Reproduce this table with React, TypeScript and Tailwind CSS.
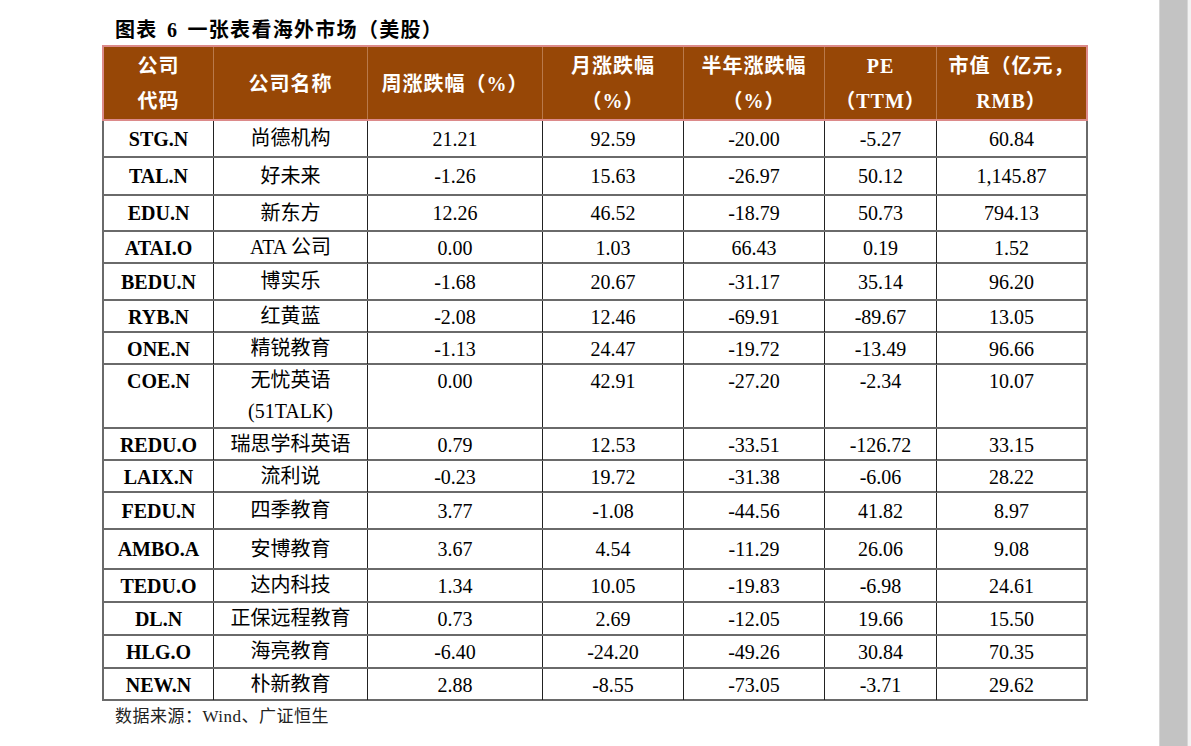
const rows: { code: string; name: string[]; vals: string[]; h: string; top?: boolean }[] = [
  { code: 'STG.N', name: ['尚德机构'], vals: ['21.21', '92.59', '-20.00', '-5.27', '60.84'], h: 'h-[37px]' },
  { code: 'TAL.N', name: ['好未来'], vals: ['-1.26', '15.63', '-26.97', '50.12', '1,145.87'], h: 'h-[38px]' },
  { code: 'EDU.N', name: ['新东方'], vals: ['12.26', '46.52', '-18.79', '50.73', '794.13'], h: 'h-[36px]' },
  { code: 'ATAI.O', name: ['ATA 公司'], vals: ['0.00', '1.03', '66.43', '0.19', '1.52'], h: 'h-[32px]' },
  { code: 'BEDU.N', name: ['博实乐'], vals: ['-1.68', '20.67', '-31.17', '35.14', '96.20'], h: 'h-[37px]' },
  { code: 'RYB.N', name: ['红黄蓝'], vals: ['-2.08', '12.46', '-69.91', '-89.67', '13.05'], h: 'h-[32px]' },
  { code: 'ONE.N', name: ['精锐教育'], vals: ['-1.13', '24.47', '-19.72', '-13.49', '96.66'], h: 'h-[32px]' },
  { code: 'COE.N', name: ['无忧英语', '(51TALK)'], vals: ['0.00', '42.91', '-27.20', '-2.34', '10.07'], h: 'h-[64px]', top: true },
  { code: 'REDU.O', name: ['瑞思学科英语'], vals: ['0.79', '12.53', '-33.51', '-126.72', '33.15'], h: 'h-[32px]' },
  { code: 'LAIX.N', name: ['流利说'], vals: ['-0.23', '19.72', '-31.38', '-6.06', '28.22'], h: 'h-[32px]' },
  { code: 'FEDU.N', name: ['四季教育'], vals: ['3.77', '-1.08', '-44.56', '41.82', '8.97'], h: 'h-[37px]' },
  { code: 'AMBO.A', name: ['安博教育'], vals: ['3.67', '4.54', '-11.29', '26.06', '9.08'], h: 'h-[40px]' },
  { code: 'TEDU.O', name: ['达内科技'], vals: ['1.34', '10.05', '-19.83', '-6.98', '24.61'], h: 'h-[33px]' },
  { code: 'DL.N', name: ['正保远程教育'], vals: ['0.73', '2.69', '-12.05', '19.66', '15.50'], h: 'h-[33px]' },
  { code: 'HLG.O', name: ['海亮教育'], vals: ['-6.40', '-24.20', '-49.26', '30.84', '70.35'], h: 'h-[33px]' },
  { code: 'NEW.N', name: ['朴新教育'], vals: ['2.88', '-8.55', '-73.05', '-3.71', '29.62'], h: 'h-[32px]' },
]

const grid = 'grid grid-cols-[110px_154px_175px_141px_141px_112px_149px]'

const headers: string[][] = [
  ['公司', '代码'],
  ['公司名称'],
  ['周涨跌幅（%）'],
  ['月涨跌幅', '（%）'],
  ['半年涨跌幅', '（%）'],
  ['PE', '（TTM）'],
  ['市值（亿元，', 'RMB）'],
]

export default function App() {
  return (
    <div
      className="flex h-[746px] w-[1191px] bg-white text-black"
      style={{ fontFamily: '"Liberation Serif", "Noto Sans CJK SC", serif' }}
    >
      <div className="flex-1 pl-[102px] pt-[17px]">
        <h1 className="pl-[13px] text-[20px] font-bold leading-[26px] tracking-[1.3px]">
          图表 <span className="mx-[3px]">6</span> 一张表看海外市场（美股）
        </h1>

        <div className="mt-[2px] w-[986px]">
          {/* Header */}
          <div className={`${grid} h-[76px] border-2 border-[#dc8a8a] bg-[#974706] text-white`}>
            {headers.map((lines, i) => (
              <div
                key={i}
                className={`flex flex-col items-center justify-center pt-[2px] text-[20px] font-bold leading-[35px] ${
                  i < headers.length - 1 ? 'border-r border-[#b9794a]' : ''
                }`}
              >
                {lines.map((l) => (
                  <span key={l} className="tracking-[1px]">
                    {l}
                  </span>
                ))}
              </div>
            ))}
          </div>

          {/* Body */}
          <div className="border-x-2 border-[#6a6a6a]">
            {rows.map((r) => (
              <div key={r.code} className={`${grid} ${r.h} border-b-2 border-[#6a6a6a] text-[20px]`}>
                <div
                  className={`flex justify-center border-r border-[#222] font-bold ${
                    r.top ? 'items-start leading-[32px]' : 'items-center'
                  }`}
                >
                  {r.code}
                </div>
                <div
                  className={`flex flex-col items-center border-r border-[#222] leading-[31px] ${
                    r.top ? 'justify-start' : 'justify-center'
                  }`}
                >
                  {r.name.map((n) => (
                    <span key={n}>{n}</span>
                  ))}
                </div>
                {r.vals.map((v, j) => (
                  <div
                    key={j}
                    className={`flex justify-center ${j < r.vals.length - 1 ? 'border-r border-[#222]' : ''} ${
                      r.top ? 'items-start leading-[32px]' : 'items-center'
                    }`}
                  >
                    {v}
                  </div>
                ))}
              </div>
            ))}
          </div>
        </div>

        <p className="mt-[4px] pl-[13px] text-[17px] leading-[24px] tracking-[0.5px] text-[#222]">
          数据来源：Wind、广证恒生
        </p>
      </div>

      <div className="w-[29px] border-x border-[#d6d6d6] bg-[#c3c3c3]" />
      <div className="w-[3px] bg-[#f2f2f2]" />
    </div>
  )
}
